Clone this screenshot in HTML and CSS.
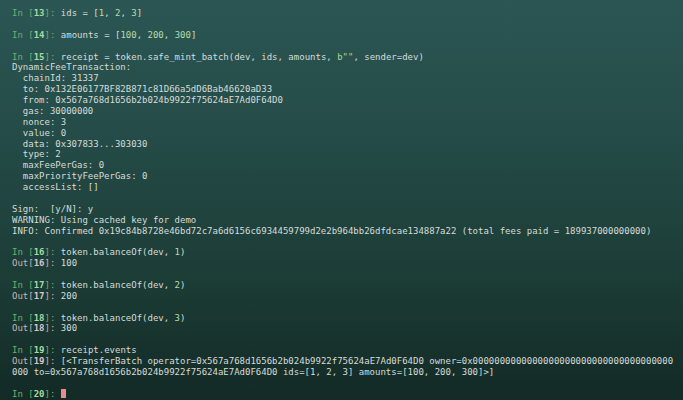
FILE: index.html
```html
<!DOCTYPE html>
<html>
<head>
<meta charset="utf-8">
<link rel="stylesheet" href="styles.css">
</head>
<body>
<main class="term">
<div class="ln"><span class="pin">In [</span><b class="pn">13</b><span class="pin">]: </span>ids = [<span class="num">1</span>, <span class="num">2</span>, <span class="num">3</span>]</div>
<div class="ln"></div>
<div class="ln"><span class="pin">In [</span><b class="pn">14</b><span class="pin">]: </span>amounts = [<span class="num">100</span>, <span class="num">200</span>, <span class="num">300</span>]</div>
<div class="ln"></div>
<div class="ln"><span class="pin">In [</span><b class="pn">15</b><span class="pin">]: </span>receipt = token.safe_mint_batch(dev, ids, amounts, <span class="str">b""</span>, sender=dev)</div>
<div class="ln">DynamicFeeTransaction:</div>
<div class="ln">  chainId: 31337</div>
<div class="ln">  to: 0x132E06177BF82B871c81D66a5dD6Bab46620aD33</div>
<div class="ln">  from: 0x567a768d1656b2b024b9922f75624aE7Ad0F64D0</div>
<div class="ln">  gas: 30000000</div>
<div class="ln">  nonce: 3</div>
<div class="ln">  value: 0</div>
<div class="ln">  data: 0x307833...303030</div>
<div class="ln">  type: 2</div>
<div class="ln">  maxFeePerGas: 0</div>
<div class="ln">  maxPriorityFeePerGas: 0</div>
<div class="ln">  accessList: []</div>
<div class="ln"></div>
<div class="ln">Sign:  [y/N]: y</div>
<div class="ln">WARNING: Using cached key for demo</div>
<div class="ln">INFO: Confirmed 0x19c84b8728e46bd72c7a6d6156c6934459799d2e2b964bb26dfdcae134887a22 (total fees paid = 189937000000000)</div>
<div class="ln"></div>
<div class="ln"><span class="pin">In [</span><b class="pn">16</b><span class="pin">]: </span>token.balanceOf(dev, <span class="num">1</span>)</div>
<div class="ln"><span class="pout">Out[</span><b class="po">16</b><span class="pout">]: </span>100</div>
<div class="ln"></div>
<div class="ln"><span class="pin">In [</span><b class="pn">17</b><span class="pin">]: </span>token.balanceOf(dev, <span class="num">2</span>)</div>
<div class="ln"><span class="pout">Out[</span><b class="po">17</b><span class="pout">]: </span>200</div>
<div class="ln"></div>
<div class="ln"><span class="pin">In [</span><b class="pn">18</b><span class="pin">]: </span>token.balanceOf(dev, <span class="num">3</span>)</div>
<div class="ln"><span class="pout">Out[</span><b class="po">18</b><span class="pout">]: </span>300</div>
<div class="ln"></div>
<div class="ln"><span class="pin">In [</span><b class="pn">19</b><span class="pin">]: </span>receipt.events</div>
<div class="ln"><span class="pout">Out[</span><b class="po">19</b><span class="pout">]: </span>[&lt;TransferBatch operator=0x567a768d1656b2b024b9922f75624aE7Ad0F64D0 owner=0x0000000000000000000000000000000000000</div>
<div class="ln">000 to=0x567a768d1656b2b024b9922f75624aE7Ad0F64D0 ids=[1, 2, 3] amounts=[100, 200, 300]&gt;]</div>
<div class="ln"></div>
<div class="ln"><span class="pin">In [</span><b class="pn">20</b><span class="pin">]: </span><span class="cursor"></span></div>
</main>
</body>
</html>
```
FILE: styles.css
```css
html, body {
  margin: 0;
  padding: 0;
  height: 100%;
}
body {
  background: linear-gradient(180deg, #2b5654 0%, #244b47 35%, #1c3c36 70%, #132a25 100%);
  overflow: hidden;
}
.term {
  padding: 8px 0 0 12px;
  font-family: "DejaVu Sans Mono", monospace;
  font-size: 9px;
  line-height: 10.886px;
  color: #d6dcd9;
}
.ln {
  white-space: pre;
  height: 10.886px;
}
.pin {
  color: #6fae6f;
}
.pn {
  color: #a4dca0;
  font-weight: bold;
}
.pout {
  color: #c9b3b3;
}
.po {
  color: #dcc4c4;
  font-weight: bold;
}
.num {
  color: #b8dca8;
}
.str {
  color: #a8d898;
}
.cursor {
  display: inline-block;
  width: 5.4px;
  height: 9px;
  vertical-align: -1px;
  background: #e88c8c;
}
```
